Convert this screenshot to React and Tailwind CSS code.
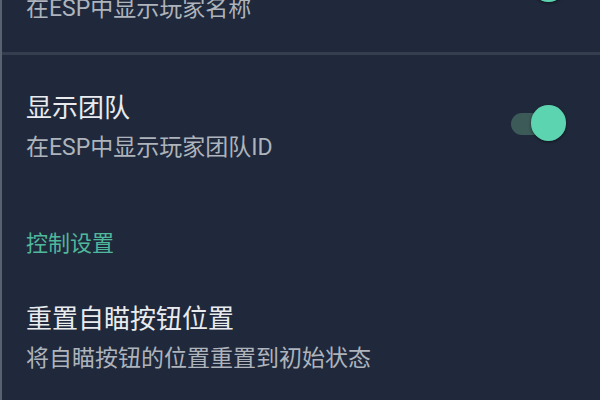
import React, { useState } from 'react';

const Toggle = ({ on, onChange }) => (
  <button
    onClick={() => onChange(!on)}
    className="relative w-[56px] h-[36px] shrink-0 -mt-[10px]"
  >
    <span className={`absolute left-0 top-[8px] w-[50px] h-[22px] rounded-full ${on ? 'bg-[#3b5a58]' : 'bg-[#4a5260]'}`} />
    <span className={`absolute top-0 w-[35px] h-[36px] rounded-full shadow-[0_1px_3px_rgba(0,0,0,0.5)] ${on ? 'left-[20px] bg-[#5dd4b0]' : 'left-0 bg-[#c9ced6]'}`} />
  </button>
);

const SettingRow = ({ title, desc, on, onToggle, className = '' }) => (
  <div className={`flex items-center justify-between pl-[24px] pr-[33px] ${className}`}>
    <div className="flex flex-col">
      <p className="text-[26px] leading-[34px] text-[#e9ebee]">{title}</p>
      <p className="text-[23px] leading-[34px] mt-[6px] text-[#aeb3bc]">{desc}</p>
    </div>
    {onToggle && <Toggle on={on} onChange={onToggle} />}
  </div>
);

export default function App() {
  const [showName, setShowName] = useState(true);
  const [showTeam, setShowTeam] = useState(true);

  return (
    <div
      className="w-[600px] h-[400px] overflow-hidden bg-[#1f293b] border-l-2 border-[#586170]"
      style={{ fontFamily: '"Roboto", "Noto Sans CJK SC", sans-serif' }}
    >
      <div className="-mt-[84px]">
        <SettingRow
          title="显示名称"
          desc="在ESP中显示玩家名称"
          on={showName}
          onToggle={setShowName}
          className="pt-[36px] pb-[26px]"
        />
        <div className="h-[3px] bg-[#343e4e]" />
        <SettingRow
          title="显示团队"
          desc="在ESP中显示玩家团队ID"
          on={showTeam}
          onToggle={setShowTeam}
          className="pt-[36px]"
        />
        <p className="pl-[24px] mt-[63px] text-[22px] leading-[32px] text-[#4fb89c]">控制设置</p>
        <SettingRow
          title="重置自瞄按钮位置"
          desc="将自瞄按钮的位置重置到初始状态"
          className="pt-[42px]"
        />
      </div>
    </div>
  );
}
